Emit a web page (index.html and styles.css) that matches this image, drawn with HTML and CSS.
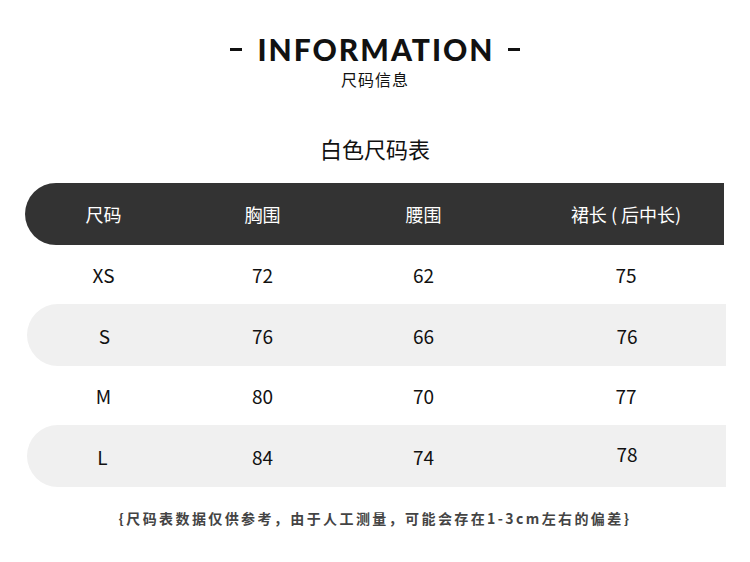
FILE: index.html
```html
<!DOCTYPE html>
<html lang="zh">
<head>
<meta charset="utf-8">
<link rel="stylesheet" href="styles.css">
</head>
<body>
<div class="page">
  <div class="head">
    <div class="title"><span class="dash"></span><span class="en">INFORMATION</span><span class="dash"></span></div>
    <div class="sub">尺码信息</div>
  </div>
  <div class="table-title">白色尺码表</div>
  <div class="table">
    <div class="row hdr"><div>尺码</div><div>胸围</div><div>腰围</div><div class="last">裙长 ( 后中长)</div></div>
    <div class="row"><div>XS</div><div>72</div><div>62</div><div class="last">75</div></div>
    <div class="row gray"><div>S</div><div>76</div><div>66</div><div class="last">76</div></div>
    <div class="row"><div>M</div><div>80</div><div>70</div><div class="last">77</div></div>
    <div class="row gray"><div class="l">L</div><div>84</div><div>74</div><div class="last up">78</div></div>
  </div>
  <div class="note">{尺码表数据仅供参考，由于人工测量，可能会存在1-3cm左右的偏差}</div>
</div>
</body>
</html>
```
FILE: styles.css
```css
html, body { margin: 0; padding: 0; background: #fff; }
body { font-family: "Noto Sans CJK SC", "Noto Sans", sans-serif; color: #111; }
.page { width: 750px; height: 562px; overflow: hidden; }
.head { padding-top: 30px; display: flex; flex-direction: column; align-items: center; }
.title { display: flex; align-items: center; gap: 15px; height: 38px; }
.dash { display: block; width: 12px; height: 3px; background: #111; }
.en { font-family: "Lato", "Noto Sans", sans-serif; font-weight: 900; font-size: 30px; letter-spacing: 2px; line-height: 38px; color: #111; margin-right: -2px; }
.sub { font-size: 16px; line-height: 22px; margin-top: 0px; color: #111; letter-spacing: 1px; }
.table-title { text-align: center; font-size: 22px; line-height: 30px; margin-top: 43px; color: #111; }
.table { margin-top: 20px; }
.row { display: grid; grid-template-columns: 157px 161px 161px 220px; width: 699px; margin-left: 25px; height: 59px; align-items: center; font-size: 19px; }
.row > div { text-align: center; }
.row > .last { padding-left: 24px; }
.hdr { background: #333; color: #fff; border-radius: 31px 0 0 31px; height: 62px; font-size: 18px; }
.gray { background: #f0f0f0; border-radius: 31px 0 0 31px; margin-left: 27px; height: 62px; grid-template-columns: 155px 161px 161px 222px; }
.gray > .l { margin-left: -4px; }
.up { position: relative; top: -3px; }
.note { text-align: center; margin-top: 21px; font-size: 14px; font-weight: 700; color: #444; letter-spacing: 2.4px; line-height: 20px; }
```
